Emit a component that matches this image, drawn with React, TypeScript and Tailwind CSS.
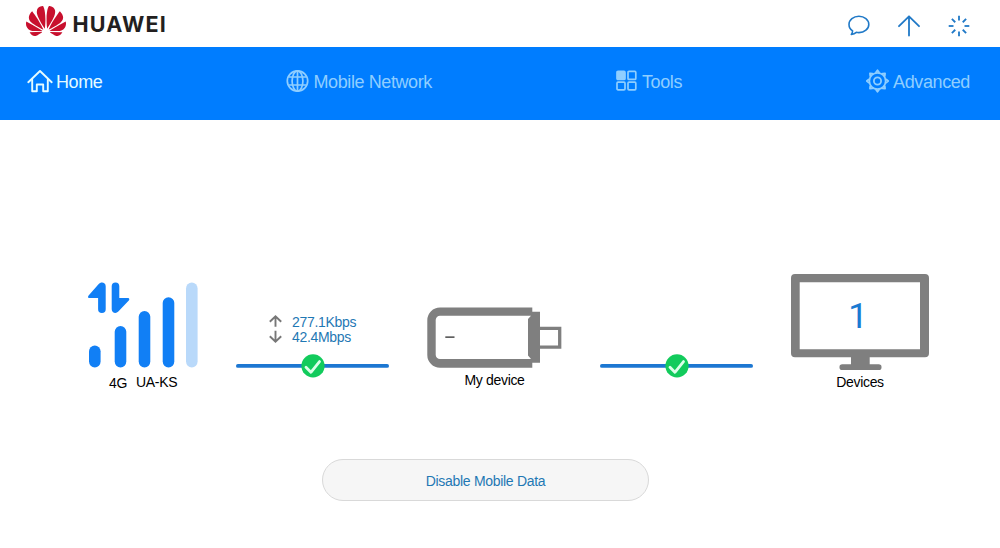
import type { ReactNode } from 'react';
import { SiHuawei } from 'react-icons/si';

/* -------------------------------- data ----------------------------------- */

type NavItem = { label: string; icon: ReactNode; active?: boolean };

// x, top edge and state of each signal bar
const BARS = [
  { x: 1, y: 63.5, on: true },
  { x: 26.7, y: 44, on: true },
  { x: 50.7, y: 29, on: true },
  { x: 74.7, y: 15.2, on: true },
  { x: 98, y: 0.6, on: false },
];

const NAV: NavItem[] = [
  { label: 'Home', icon: <HomeIcon />, active: true },
  { label: 'Mobile Network', icon: <GlobeIcon /> },
  { label: 'Tools', icon: <ToolsIcon /> },
  { label: 'Advanced', icon: <GearIcon /> },
];

/* -------------------------------- icons ---------------------------------- */

function HomeIcon() {
  return (
    <svg width="26" height="24" viewBox="0 0 26 24" fill="none" stroke="currentColor" strokeWidth="1.9" strokeLinecap="round" strokeLinejoin="round">
      <path d="M1.3 13.2 13 2l11.7 11.2" />
      <path d="M5.2 10.5v11.7h4.6v-6.7h6.4v6.7h4.6V10.5" />
    </svg>
  );
}

function GlobeIcon() {
  return (
    <svg width="23" height="24" viewBox="0 0 23 24" fill="none" stroke="currentColor" strokeWidth="1.7">
      <circle cx="11.5" cy="12" r="10.2" />
      <ellipse cx="11.5" cy="12" rx="5.4" ry="10.2" />
      <path d="M11.5 1.8v20.4M2.4 8h18.2M2.4 16h18.2" />
    </svg>
  );
}

function ToolsIcon() {
  return (
    <svg width="22" height="24" viewBox="0 0 22 24" fill="none" stroke="currentColor" strokeWidth="1.7">
      <rect x="1" y="2.4" width="8" height="8" rx="1" fill="currentColor" />
      <rect x="12" y="2.4" width="7.8" height="8" rx="1" />
      <rect x="1" y="13.2" width="8" height="7.6" rx="1" />
      <rect x="12" y="13.2" width="7.8" height="7.6" rx="1" />
    </svg>
  );
}

function GearIcon() {
  return (
    <svg width="23" height="24" viewBox="0 0 23 24" fill="none" stroke="currentColor" strokeWidth="1.8">
      <circle cx="11.5" cy="12" r="8.2" />
      <circle cx="11.5" cy="12" r="3.6" />
      {[0, 45, 90, 135, 180, 225, 270, 315].map((a) => (
        <path key={a} d="M10 3.2 11.5 1.3 13 3.2" strokeLinejoin="round" strokeLinecap="round" transform={`rotate(${a} 11.5 12)`} />
      ))}
    </svg>
  );
}

function MessageIcon() {
  return (
    <svg width="22" height="22" viewBox="0 0 22 22" fill="none" stroke="currentColor" strokeWidth="1.6" strokeLinejoin="round">
      <path d="M4.6 15.8C2.2 14.2 1 11.9 1 9.4 1 4.8 5.4 1.2 10.9 1.2s9.900 3.600 9.900 8.200-4.400 8.200-9.900 8.200c-.9 0-1.800-.1-2.600-.3-1.200 1.100-3 1.900-5 2.200.9-1.100 1.300-2.300 1.300-3.700Z" />
    </svg>
  );
}

function UpdateIcon() {
  return (
    <svg width="22" height="22" viewBox="0 0 22 22" fill="none" stroke="currentColor" strokeWidth="1.8" strokeLinecap="round" strokeLinejoin="round">
      <path d="M11 20.6V1.5M1 11.2 11 1.3l10 9.9" />
    </svg>
  );
}

function SpinnerIcon() {
  return (
    <svg width="22" height="22" viewBox="0 0 22 22" fill="none" stroke="currentColor" strokeWidth="1.8">
      {[0, 90, 180, 270].map((a) => (
        <path key={a} d="M11 .7v4.8" transform={`rotate(${a} 11 11)`} />
      ))}
      {[45, 135, 225, 315].map((a) => (
        <path key={a} d="M11 .9v4.8" transform={`rotate(${a} 11 11)`} />
      ))}
    </svg>
  );
}

function RateArrow({ down }: { down?: boolean }) {
  return (
    <svg width="13" height="15" viewBox="0 0 13 15" fill="none" stroke="#777777" strokeWidth="1.9">
      <path d={down ? 'M6.5 1.8v10.5M.8 7.2l5.7 5.4 5.7-5.4' : 'M6.5 12.8V2.2M.8 7.7l5.7-5.5 5.7 5.5'} />
    </svg>
  );
}

/* ------------------------------- graphics -------------------------------- */

function SignalBars() {
  return (
    <svg width="110" height="86" viewBox="0 0 110 86" fill="#117ff5">
      <path d="M10.5 2.200C13-.6 17.700.4 17.700 4.200V27.200a3.800 3.800 0 0 1-7.600 0V16H1.200C-.1 16-.3 14.300.6 13.400Z" />
      <path d="M23.700 4.300a3.800 3.800 0 0 1 7.600 0V16h8.800c1.300 0 1.600 1.500.7 2.500L30.300 29.600c-2.500 2.700-6.600 1-6.600-2.400Z" />
      {BARS.map((b) => (
        <rect key={b.x} x={b.x} y={b.y} width="11.6" height={85.4 - b.y} rx="5.8" fill={b.on ? '#117ff5' : '#b9d9fa'} />
      ))}
    </svg>
  );
}

function Link() {
  return (
    <svg width="153" height="24" viewBox="0 0 153 24">
      <rect y="10" width="153" height="3.8" rx="1.9" fill="#1c77d2" />
      <circle cx="77" cy="11.9" r="11.6" fill="#12cb5c" />
      <path d="m70 13.300 4.900 5 8.600-10.700" fill="none" stroke="#dcffe9" strokeWidth="2.8" strokeLinecap="round" strokeLinejoin="round" />
    </svg>
  );
}

function Dongle() {
  return (
    <svg width="135" height="62" viewBox="0 0 135 62" fill="#7f7f7f">
      <path
        fillRule="evenodd"
        d="M13 .5h92.300v4.200h7.700v51h-7.700v5H13A12.700 12.700 0 0 1 .3 48V13.200A12.700 12.700 0 0 1 13 .5Zm0 8.200a4.300 4.300 0 0 0-4.300 4.300v34.700A4.300 4.300 0 0 0 13 52h91l-3-3.500V12l3-3.300Z"
      />
      <path d="M113 21.300h19.700v18.800H113" fill="none" stroke="#7f7f7f" strokeWidth="3.3" />
      <path d="M18.300 29.300h9.200v1.700h-9.200z" fill="#5f5f5f" />
    </svg>
  );
}

function Monitor({ count }: { count: number }) {
  return (
    <svg width="138" height="96" viewBox="0 0 138 96" fill="#7f7f7f">
      <path fillRule="evenodd" d="M4 0h130a4 4 0 0 1 4 4v75.300a4 4 0 0 1-4 4H4a4 4 0 0 1-4-4V4a4 4 0 0 1 4-4Zm4.700 8.300v67H129v-67Z" />
      <path d="M60 83h18.700v7.300h9a2.800 2.800 0 0 1 0 5.700H51.300a2.800 2.800 0 0 1 0-5.700H60Z" />
      <text x="67" y="54" textAnchor="middle" fontSize="35" fill="#1a7ad2" className="font-['Roboto',sans-serif] tracking-normal">
        {count}
      </text>
    </svg>
  );
}

/* --------------------------------- page ---------------------------------- */

export default function App() {
  return (
    <div className="h-[548px] w-[1000px] overflow-hidden bg-white font-['Liberation_Sans',Arial,sans-serif] text-[14px] leading-4 tracking-[-0.32px] text-black">
      <header className="flex h-[47px] items-start justify-between pr-[30px] pl-[26px]">
        <div className="flex items-center pt-px">
          <SiHuawei className="size-10 text-[#c8102e]" />
          <span className="ml-[6.5px] pt-[6px] font-['Inter',sans-serif] text-[21.5px] font-bold tracking-[1.2px] text-[#231f20]">
            HUAWEI
          </span>
        </div>
        <div className="flex gap-7 pt-[15px] text-[#2079c7]">
          <MessageIcon />
          <UpdateIcon />
          <SpinnerIcon />
        </div>
      </header>

      <nav className="flex h-[73px] items-start justify-between bg-[#007dff] pt-[22px] pr-[30px] pl-[27px] text-[18px] leading-6 tracking-[-0.4px]">
        {NAV.map((item) => (
          <a key={item.label} className={item.active ? 'flex gap-[3px] text-[#e4fbff]' : 'flex gap-1 text-[#8fceff]'}>
            {item.icon}
            <span className="pt-px">{item.label}</span>
          </a>
        ))}
      </nav>

      <main className="flex flex-col pt-[154px]">
        <div className="flex h-[185px] items-start gap-[38px] pl-[88px]">
          <div className="w-[110px] pt-2">
            <SignalBars />
            <div className="flex gap-[9px] pt-[6px] pl-[21px]">
              <span className="pt-px">4G</span>
              <span>UA-KS</span>
            </div>
          </div>

          <div className="w-[153px] pt-10">
            <div className="mb-[10px] flex flex-col pl-[33px] leading-[15px] text-[#1f78b4]">
              <div className="flex h-[15px] gap-[10px]">
                <RateArrow />
                <span className="pt-px">277.1Kbps</span>
              </div>
              <div className="flex h-[15px] gap-[10px]">
                <RateArrow down />
                <span className="pt-px">42.4Mbps</span>
              </div>
            </div>
            <Link />
          </div>

          <div className="flex w-[135px] flex-col items-center pt-[33px]">
            <Dongle />
            <span className="pt-[3px]">My device</span>
          </div>

          <div className="w-[153px] pt-20">
            <Link />
          </div>

          <div className="flex w-[138px] flex-col items-center">
            <Monitor count={1} />
            <span className="pt-1">Devices</span>
          </div>
        </div>

        <button className="ml-[322px] h-[42px] w-[327px] rounded-full border border-[#d9d9d9] bg-[#f6f6f6] pt-px tracking-[-0.3px] text-[#1f78b4]">
          Disable Mobile Data
        </button>
      </main>
    </div>
  );
}
